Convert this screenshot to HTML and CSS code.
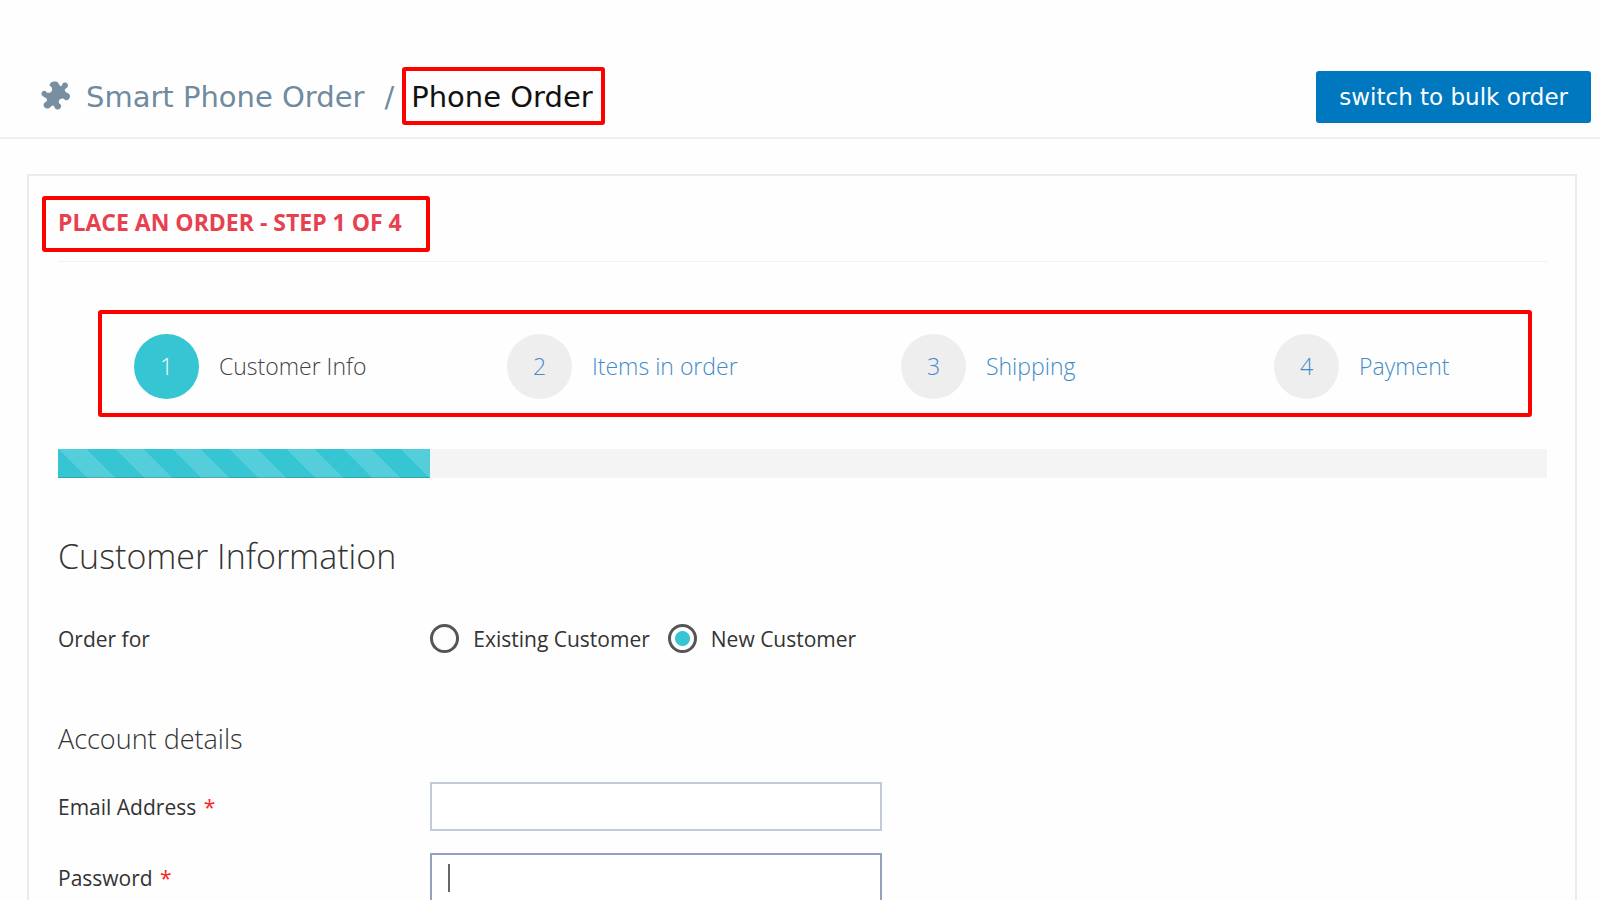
FILE: index.html
```html
<!DOCTYPE html>
<html lang="en">
<head>
    <meta charset="UTF-8">
    <meta name="viewport" content="width=device-width, initial-scale=1">
    <title>Phone Order</title>
    <link rel="stylesheet" href="styles.css">
</head>
<body>
    <header class="page-header">
        <nav class="breadcrumb" aria-label="Breadcrumb">
            <svg class="breadcrumb-icon" viewBox="0 0 30 30" aria-hidden="true">
                <path d="M8.500 4.500 C8.500 1.500 12 0 15 .5 C18 1 18 5 20 5.200 C21.500 5.200 20.500 2 23.500 1.500 C26 1.200 27.500 3.500 26.800 5.500 C26 7.500 23.500 7.500 23.800 9.500 C24.200 12 28.800 11.500 29 15 C29 18 26.500 20 24 19 C23 17.500 21 17 19 18.300 C17 20 17.500 22.500 20 24 C20.500 26.500 19 28.500 16 28.500 C13.500 28.500 14 25 11.800 24.500 C9.500 24.500 9.500 28 6 27.500 C3 27 1.800 24.500 3 22.500 C4.500 20.500 6.500 20.500 6 18.500 C5.500 16 1 16.500 .5 13 C.300 11 2 9.300 4.500 10 C5.500 12 8 12.500 10 11 C12 9.200 11.500 6 8.500 4.500 Z"/>
            </svg>
            <a class="breadcrumb-parent" href="#">Smart Phone Order</a>
            <span class="breadcrumb-separator">/</span>
            <h1 class="breadcrumb-current marked">Phone Order</h1>
        </nav>
        <button type="button" class="btn-primary">switch to bulk order</button>
    </header>

    <main class="panel">
        <div class="panel-title">
            <h2 class="panel-caption marked">Place an order - Step 1 of 4</h2>
        </div>

        <nav class="steps marked" aria-label="Order steps">
            <a class="step active" href="#customer"><span class="step-number">1</span>Customer Info</a>
            <a class="step" href="#items"><span class="step-number">2</span>Items in order</a>
            <a class="step" href="#shipping"><span class="step-number">3</span>Shipping</a>
            <a class="step" href="#payment"><span class="step-number">4</span>Payment</a>
        </nav>

        <div class="progress">
            <div class="progress-bar" style="width: 25%"></div>
        </div>

        <form class="order-form">
            <h3 class="form-heading">Customer Information</h3>

            <div class="form-row" role="radiogroup" aria-labelledby="order-for">
                <span id="order-for">Order for</span>
                <div class="radio-list">
                    <label class="radio"><input type="radio" name="customer" value="existing">Existing Customer</label>
                    <label class="radio"><input type="radio" name="customer" value="new" checked>New Customer</label>
                </div>
            </div>

            <h4 class="form-subheading">Account details</h4>

            <div class="form-row">
                <label for="email">Email Address <span class="required">*</span></label>
                <div class="field"><input type="email" id="email" class="form-control"></div>
            </div>
            <div class="form-row">
                <label for="password">Password <span class="required">*</span></label>
                <div class="field">
                    <input type="password" id="password" class="form-control current">
                    <span class="caret"></span>
                </div>
            </div>
        </form>
    </main>
</body>
</html>
```
FILE: styles.css
```css
:root {
    --teal: #36c6d3;
    --blue: #0078bf;
    --link: #428bca;
    --mark: #ff0000;
    --line: #e7ecf1;
}

* {
    box-sizing: border-box;
}

body {
    margin: 0;
    background: #fefefe;
    color: #333;
    font-family: "Open Sans", sans-serif;
    font-size: 21px;
    line-height: 28px;
}

h1, h2, h3, h4 {
    margin: 0;
}

a {
    color: var(--link);
    text-decoration: none;
}

/* red frame round the highlighted parts */
.marked {
    border: 4px solid var(--mark);
    border-radius: 3px;
}

/* Header */
.page-header {
    display: flex;
    justify-content: space-between;
    align-items: center;
    padding: 67px 9px 12px 41px;
    border-bottom: 2px solid #eee;
    font-family: "DejaVu Sans", sans-serif;
}

.breadcrumb {
    display: flex;
    align-items: center;
    color: #708a9e;
    font-size: 29px;
}

.breadcrumb-icon {
    width: 30px;
    height: 30px;
    margin-right: 15px;
    fill: #788fa1;
}

.breadcrumb-parent,
.breadcrumb-separator {
    padding-top: 2px;
    color: inherit;
}

.breadcrumb-separator {
    margin: 0 8px 0 20px;
}

.breadcrumb-current {
    padding: 12px 8px 10px 5px;
    color: #111;
    font-size: 29px;
    font-weight: 400;
    line-height: 28px;
}

.btn-primary {
    padding: 12px 23px;
    border: 0;
    border-radius: 3px;
    background: var(--blue);
    color: #fff;
    font-family: inherit;
    font-size: 23px;
    line-height: 28px;
    margin-top: 2px;
    cursor: pointer;
}

/* Panel */
.panel {
    margin: 35px 23px 0 27px;
    padding: 20px 28px 40px 29px;
    border: 2px solid var(--line);
    background: #fefefe;
}

.panel-title {
    display: flex;
    padding-bottom: 9px;
    border-bottom: 1px solid #eef1f5;
}

.panel-caption {
    margin-left: -16px;
    padding: 10px 24px 14px 12px;
    color: #e7404f;
    font-size: 23px;
    font-weight: 700;
    line-height: 24px;
    text-transform: uppercase;
}

.steps {
    display: grid;
    grid-template-columns: 373fr 394fr 373fr 254fr;
    margin: 48px 15px 32px 40px;
    padding: 20px 0 14px 32px;
}

.step {
    display: flex;
    align-items: center;
    gap: 20px;
    font-size: 23px;
    font-weight: 300;
    line-height: 27px;
}

.step.active {
    color: #444;
}

.step-number {
    display: flex;
    align-items: center;
    justify-content: center;
    width: 65px;
    height: 65px;
    border-radius: 50%;
    background: #eee;
}

.step.active .step-number {
    background: var(--teal);
    color: #fff;
}

.progress {
    height: 29px;
    background: #f4f4f4;
}

.progress-bar {
    height: 100%;
    background-color: var(--teal);
    background-image: linear-gradient(45deg, rgba(255,255,255,0.15) 25%, transparent 25%, transparent 50%, rgba(255,255,255,0.15) 50%, rgba(255,255,255,0.15) 75%, transparent 75%, transparent);
    background-size: 57px 57px;
    box-shadow: inset 0 -1px 0 rgba(0,0,0,0.15);
}

/* Form */
.form-heading {
    margin: 54px 0 44px;
    font-size: 34px;
    font-weight: 300;
    line-height: 48px;
}

.form-subheading {
    margin: 68px 0 25px;
    font-size: 27px;
    font-weight: 300;
    line-height: 36px;
}

.form-row {
    display: grid;
    grid-template-columns: 1fr 3fr;
    align-items: center;
    margin-bottom: 22px;
}

.radio-list {
    display: flex;
    gap: 18px;
}

.radio {
    display: flex;
    align-items: center;
    gap: 14px;
}

.radio input {
    appearance: none;
    width: 29px;
    height: 29px;
    margin: 0;
    border: 3px solid #555;
    border-radius: 50%;
}

.radio input:checked {
    background: radial-gradient(circle, var(--teal) 7px, transparent 8px);
}

.required {
    margin-left: 2px;
    color: #f22;
}

.field {
    position: relative;
}

.form-control {
    display: block;
    width: 452px;
    max-width: 100%;
    height: 49px;
    padding: 8px 17px;
    border: 2px solid #c2cad8;
    background: #fff;
    font: inherit;
}

.form-control.current {
    border-color: #93a1bb;
}

/* text cursor inside the current field */
.caret {
    position: absolute;
    top: 11px;
    left: 18px;
    width: 2px;
    height: 28px;
    background: #666;
}
```
